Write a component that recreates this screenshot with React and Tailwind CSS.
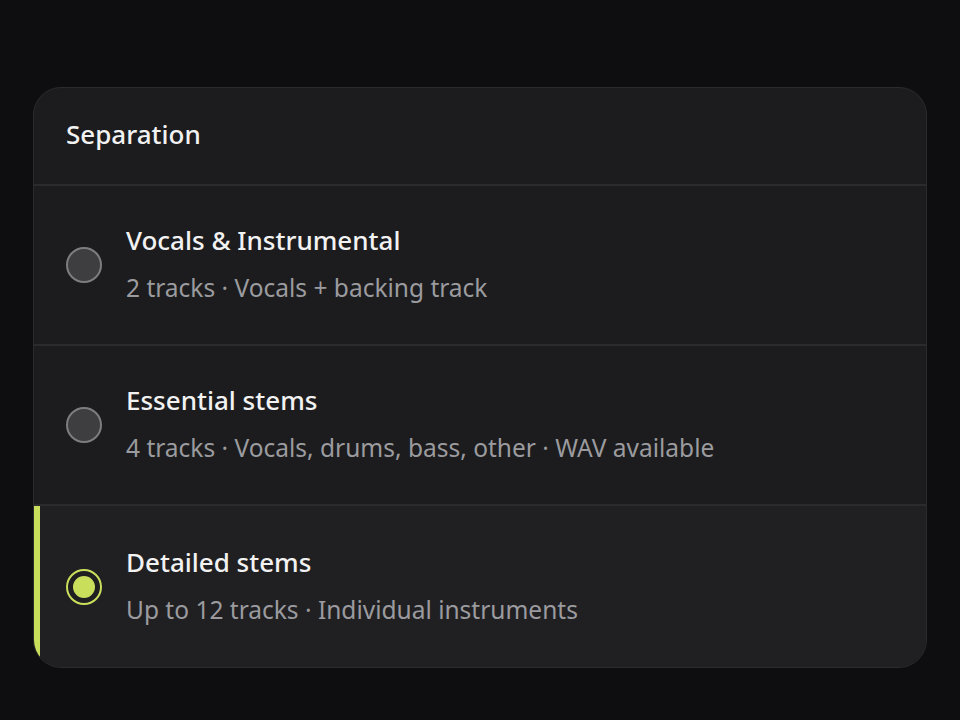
import React from "react";

const options = [
  { title: "Vocals & Instrumental", sub: "2 tracks · Vocals + backing track", selected: false },
  { title: "Essential stems", sub: "4 tracks · Vocals, drums, bass, other · WAV available", selected: false },
  { title: "Detailed stems", sub: "Up to 12 tracks · Individual instruments", selected: true },
];

function Radio({ selected }) {
  if (selected) {
    return (
      <div className="w-9 h-9 shrink-0 rounded-full border-2 border-[#c9df5c] bg-[#1f1f21] flex items-center justify-center">
        <div className="w-[22px] h-[22px] rounded-full bg-[#c9df5c]" />
      </div>
    );
  }
  return <div className="w-9 h-9 shrink-0 rounded-full border-2 border-[#7d7d80] bg-[#3e3e40]" />;
}

export default function App() {
  return (
    <div className="w-[960px] h-[720px] bg-[#0e0e10] pt-[87px] px-[33px]" style={{ fontFamily: '"Noto Sans", sans-serif' }}>
      <div className="rounded-[28px] border border-[#2b2b2d] bg-[#1c1c1e] overflow-hidden">
        <div className="h-[98px] px-8 pb-1 flex items-center border-b-2 border-[#2b2b2d]">
          <span className="text-[26px] text-[#f2f2f2] font-medium">Separation</span>
        </div>
        {options.map((o, i) => (
          <div
            key={i}
            className={
              (o.selected ? "bg-[#202022] border-l-[6px] border-[#c9df5c] pl-[26px] h-[161px] " : "pl-8 h-[160px] ") +
              "flex items-center gap-6 pr-8 " +
              (i < options.length - 1 ? "border-b-2 border-b-[#2b2b2d]" : "")
            }
          >
            <Radio selected={o.selected} />
            <div className="flex flex-col gap-[15px] pb-[3px]">
              <div className="text-[26px] leading-[34px] text-[#f2f2f2] font-medium">{o.title}</div>
              <div className="text-[24.5px] leading-[32px] text-[#9b9b9f]">{o.sub}</div>
            </div>
          </div>
        ))}
      </div>
    </div>
  );
}
